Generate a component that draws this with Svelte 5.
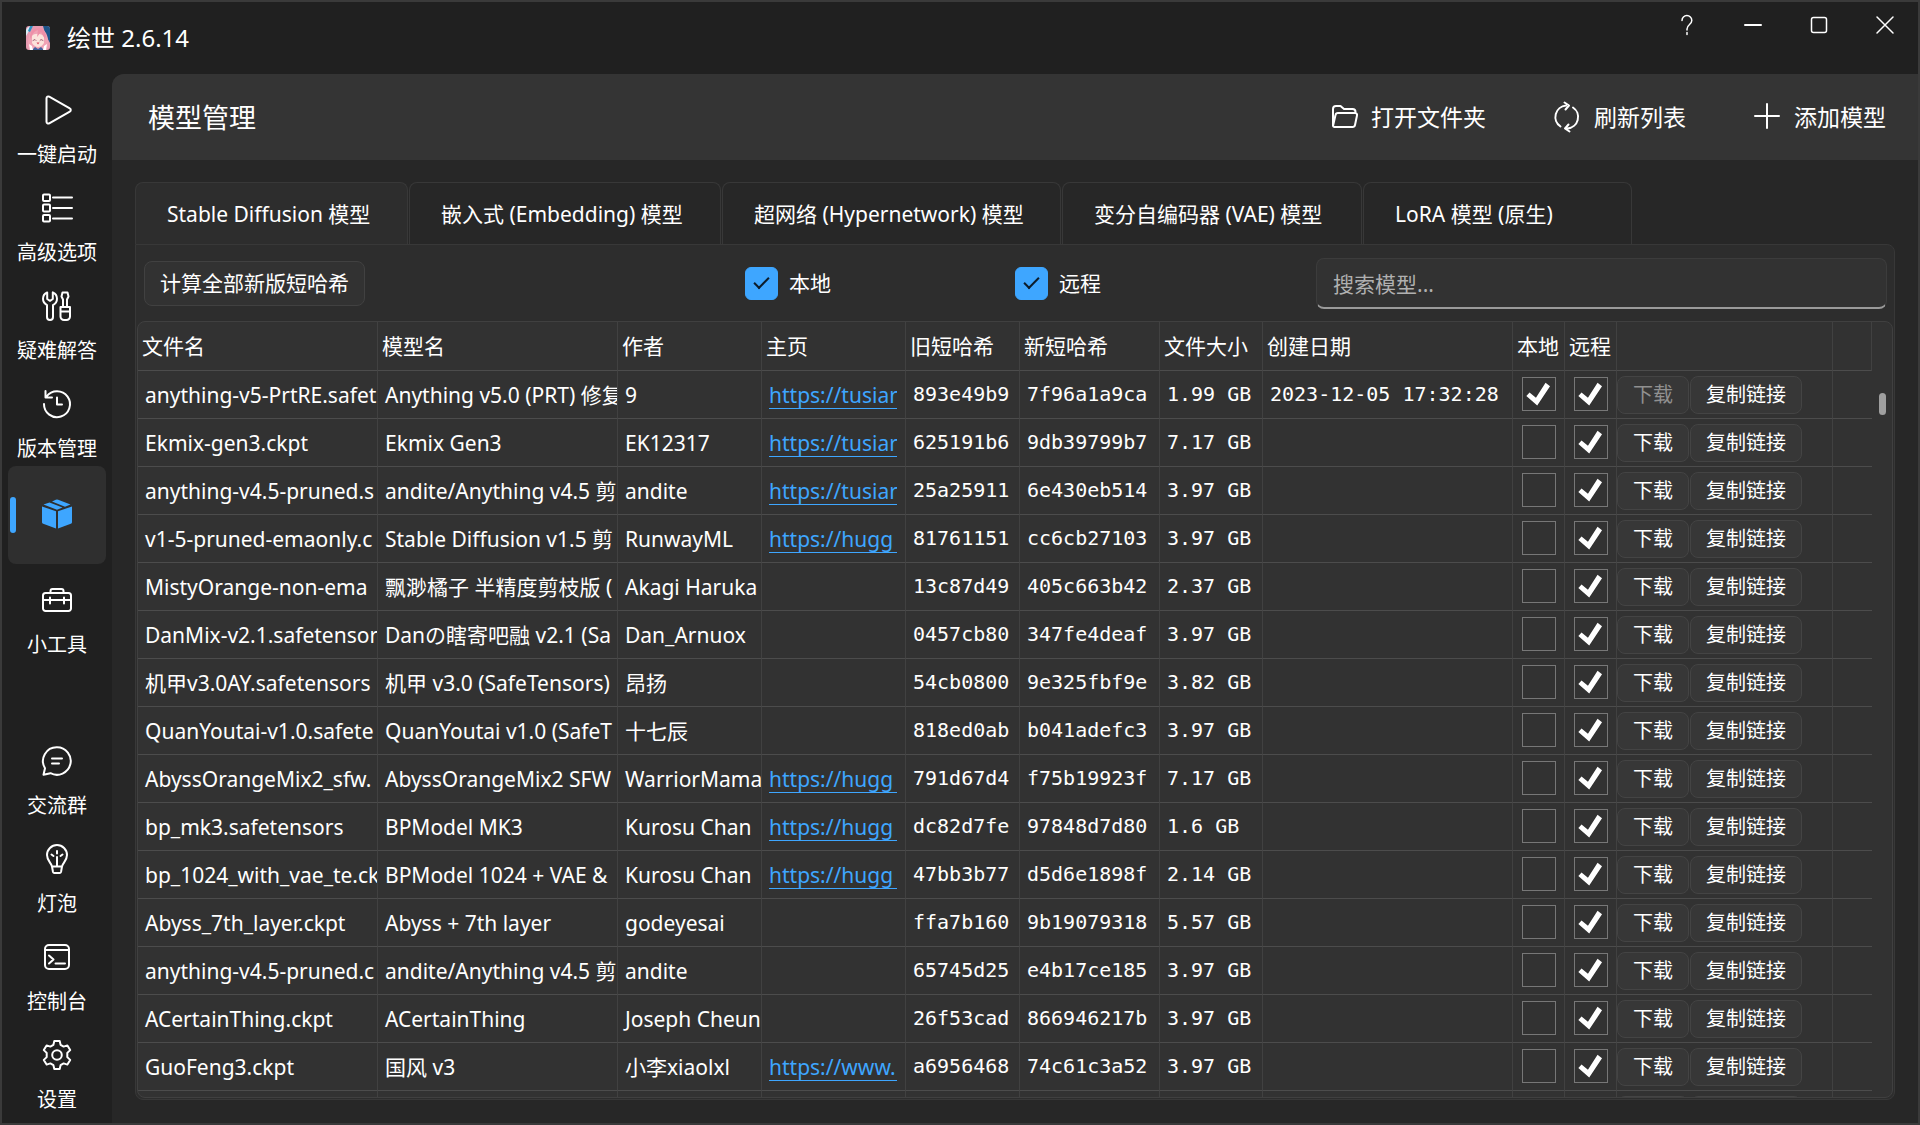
<script lang="ts">
	type Model = {
		file: string;
		name: string;
		author: string;
		home: string;
		oldHash: string;
		newHash: string;
		size: string;
		created?: string;
		local?: boolean;
	};

	let showLocal = $state(true);
	let showRemote = $state(true);
	let search = $state('');
	let activeTab = $state(0);
	let activePage = $state('models');

	const tabs = [
		'Stable Diffusion 模型',
		'嵌入式 (Embedding) 模型',
		'超网络 (Hypernetwork) 模型',
		'变分自编码器 (VAE) 模型',
		'LoRA 模型 (原生)'
	];

	const topPages = [
		{ id: 'launch', label: '一键启动' },
		{ id: 'options', label: '高级选项' },
		{ id: 'help', label: '疑难解答' },
		{ id: 'versions', label: '版本管理' },
		{ id: 'models', label: '模型管理' },
		{ id: 'tools', label: '小工具' }
	];

	const bottomPages = [
		{ id: 'chat', label: '交流群' },
		{ id: 'bulb', label: '灯泡' },
		{ id: 'console', label: '控制台' },
		{ id: 'settings', label: '设置' }
	];

	const models: Model[] = [
		{ file: 'anything-v5-PrtRE.safet', name: 'Anything v5.0 (PRT) 修复', author: '9', home: 'https://tusiar', oldHash: '893e49b9', newHash: '7f96a1a9ca', size: '1.99 GB', created: '2023-12-05 17:32:28', local: true },
		{ file: 'Ekmix-gen3.ckpt', name: 'Ekmix Gen3', author: 'EK12317', home: 'https://tusiar', oldHash: '625191b6', newHash: '9db39799b7', size: '7.17 GB' },
		{ file: 'anything-v4.5-pruned.s', name: 'andite/Anything v4.5 剪', author: 'andite', home: 'https://tusiar', oldHash: '25a25911', newHash: '6e430eb514', size: '3.97 GB' },
		{ file: 'v1-5-pruned-emaonly.c', name: 'Stable Diffusion v1.5 剪', author: 'RunwayML', home: 'https://hugg', oldHash: '81761151', newHash: 'cc6cb27103', size: '3.97 GB' },
		{ file: 'MistyOrange-non-ema', name: '飘渺橘子 半精度剪枝版 (', author: 'Akagi Haruka', home: '', oldHash: '13c87d49', newHash: '405c663b42', size: '2.37 GB' },
		{ file: 'DanMix-v2.1.safetensor', name: 'Danの瞎寄吧融 v2.1 (Sa', author: 'Dan_Arnuox', home: '', oldHash: '0457cb80', newHash: '347fe4deaf', size: '3.97 GB' },
		{ file: '机甲v3.0AY.safetensors', name: '机甲 v3.0 (SafeTensors)', author: '昂扬', home: '', oldHash: '54cb0800', newHash: '9e325fbf9e', size: '3.82 GB' },
		{ file: 'QuanYoutai-v1.0.safete', name: 'QuanYoutai v1.0 (SafeT', author: '十七辰', home: '', oldHash: '818ed0ab', newHash: 'b041adefc3', size: '3.97 GB' },
		{ file: 'AbyssOrangeMix2_sfw.', name: 'AbyssOrangeMix2 SFW', author: 'WarriorMama', home: 'https://hugg', oldHash: '791d67d4', newHash: 'f75b19923f', size: '7.17 GB' },
		{ file: 'bp_mk3.safetensors', name: 'BPModel MK3', author: 'Kurosu Chan', home: 'https://hugg', oldHash: 'dc82d7fe', newHash: '97848d7d80', size: '1.6 GB' },
		{ file: 'bp_1024_with_vae_te.ck', name: 'BPModel 1024 + VAE &', author: 'Kurosu Chan', home: 'https://hugg', oldHash: '47bb3b77', newHash: 'd5d6e1898f', size: '2.14 GB' },
		{ file: 'Abyss_7th_layer.ckpt', name: 'Abyss + 7th layer', author: 'godeyesai', home: '', oldHash: 'ffa7b160', newHash: '9b19079318', size: '5.57 GB' },
		{ file: 'anything-v4.5-pruned.c', name: 'andite/Anything v4.5 剪', author: 'andite', home: '', oldHash: '65745d25', newHash: 'e4b17ce185', size: '3.97 GB' },
		{ file: 'ACertainThing.ckpt', name: 'ACertainThing', author: 'Joseph Cheun', home: '', oldHash: '26f53cad', newHash: '866946217b', size: '3.97 GB' },
		{ file: 'GuoFeng3.ckpt', name: '国风 v3', author: '小李xiaolxl', home: 'https://www.', oldHash: 'a6956468', newHash: '74c61c3a52', size: '3.97 GB' },
		{ file: '', name: '', author: '', home: '', oldHash: '', newHash: '', size: '' }
	];
</script>

{#snippet navIcon(id: string)}
	<svg class="nav-icon" viewBox="0 0 30 30" aria-hidden="true">
		{#if id === 'launch'}
			<path d="M4.500 3.200v23.600a1.800 1.800 0 0 0 2.700 1.500l20.600-11.700a1.800 1.800 0 0 0 0-3.200L7.200 1.700a1.800 1.800 0 0 0-2.700 1.500z" />
		{:else if id === 'options'}
			<rect x="1" y="1.500" width="7" height="6.500" rx="1" />
			<rect x="1" y="11.500" width="7" height="7" rx="1" />
			<rect x="1" y="22" width="7" height="6.500" rx="1" />
			<path d="M11 4.500h19M11 15h19M11 25.500h19" />
		{:else if id === 'help'}
			<path d="M5.200 1.400A7 7 0 0 0 1 7.800c0 3 1.600 5 4 6.300V26a3 3 0 0 0 6 0V14.100c2.400-1.300 4-3.300 4-6.300a7 7 0 0 0-4.200-6.400V8l-2.800 1.800L5.200 8z" />
			<path d="M21 16V8.500l-1.500-3 1-4h5l1 4-1.500 3V16M18.500 16h9.500v9.500a3.500 3.500 0 0 1-3.500 3.500h-2.500a3.500 3.500 0 0 1-3.500-3.500zM18.500 20.500H28" />
		{:else if id === 'versions'}
			<path d="M4.500 7.500A13 13 0 1 1 2 15M3.500 2v6.500h6.500M15 8.500v7h5" />
		{:else if id === 'models'}
			<g class="solid">
				<path d="M14 12.200v17.300L1.200 24.800a1.500 1.500 0 0 1-1.200-1.500V7.500z" />
				<path d="M16 12.200v17.300l12.800-4.700a1.500 1.500 0 0 0 1.200-1.500V7.500z" />
				<path d="M1.500 5.600 7.500 3.500 20.500 8.600 15 10.700zM10 2.500l3.800-1.800a3 3 0 0 1 2.400 0L28.500 5.600 23 7.700z" />
			</g>
		{:else if id === 'tools'}
			<path d="M3.500 8h23A2.500 2.500 0 0 1 29 10.500v13a2.500 2.500 0 0 1-2.500 2.500h-23A2.500 2.500 0 0 1 1 23.500v-13A2.500 2.500 0 0 1 3.500 8zM8.500 8V6A2 2 0 0 1 10.500 4h9a2 2 0 0 1 2 2v2M1 15h28M8 12.500v6M22 12.500v6" />
		{:else if id === 'chat'}
			<path d="M15 1.200A13.800 13.800 0 1 1 8.500 27.200L1.500 28.700l1.500-6.500A13.800 13.800 0 0 1 15 1.200zM10 12.500h10M10 17.500h7" />
		{:else if id === 'bulb'}
			<path d="M10 22.500C9.500 19 5 17 5 11a10 10 0 0 1 20 0c0 6-4.500 8-5 11.500zM10 22.500l1 5.500a1.500 1.500 0 0 0 1.500 1h5A1.500 1.500 0 0 0 19 28l1-5.500M15 13v9M15 7v2.500M9.500 10.500l2 1.500M20.500 10.500l-2 1.500" />
		{:else if id === 'console'}
			<rect x="3" y="3" width="24" height="24" rx="4" />
			<path d="M3 8h24M7 13.500l4.500 4-4.500 4M13.500 21.500h9.500" />
		{:else}
			<path d="M12.300 1h5.400l.9 3.900 3 1.700 3.800-1.200 2.800 4.700-2.900 2.800v4.200l2.900 2.800-2.800 4.700-3.800-1.200-3 1.700-.9 3.900h-5.400l-.9-3.900-3-1.700-3.800 1.200-2.800-4.700 2.900-2.800v-4.200l-2.900-2.800 2.800-4.700 3.800 1.200 3-1.700z" />
			<circle cx="15" cy="15" r="4.800" />
		{/if}
	</svg>
{/snippet}

{#snippet navItem(page)}
	<button
		class="nav-item"
		class:active={activePage === page.id}
		aria-label={page.label}
		onclick={() => (activePage = page.id)}
	>
		{@render navIcon(page.id)}
		{#if activePage !== page.id}
			<span>{page.label}</span>
		{/if}
	</button>
{/snippet}

<div class="window">
	<header class="titlebar">
		<div class="brand">
			<svg class="avatar" viewBox="0 0 24 24" aria-hidden="true">
				<rect width="24" height="24" rx="3" fill="#e59ab0" />
				<path d="M17 0h4a3 3 0 0 1 3 3v14l-4-7z" fill="#1d5487" />
				<path d="M0 4c2-3 3-4 6-4h1L3 5 0 10z" fill="#d8eef5" />
				<path d="M4 0h3L4 6 2 5z" fill="#2f8fc0" />
				<path d="M3 24c-2-6-1-17 4-20 4-3 10-2 13 3 3 6 3 12 1 17z" fill="#f0a3b5" />
				<path d="M6 10c2-3 10-3 12 1v6c-2 3-4 4-6 4s-5-2-6-4z" fill="#fbe3dc" />
				<path d="M5 13c1-6 4-8 7-9l-1 7 4-5 4 7 1-3c-1-6-4-8-8-8S4 5 4 11z" fill="#ee8fa8" />
				<path d="M7 14.500l2-1 1 1M14 14.500l1-1 2 1" stroke="#a3647a" stroke-width="1" fill="none" />
				<path d="M10.500 16.500h3l-1.500 2z" fill="#d9485f" />
				<path d="M6 24l3-3 3 2 3-2 3 3z" fill="#3f5f9c" />
				<path d="M3 18l3 2 1 4H4zM18 20l3-2-1 6h-3z" fill="#fff" />
			</svg>
			<span>绘世 2.6.14</span>
		</div>
		<div class="window-controls">
			<button aria-label="帮助">
				<svg viewBox="0 0 20 20"><path d="M5 5.500a4.800 4.800 0 0 1 9.800 0c0 4-4.800 4-4.800 8.500v1M10 17.500v2" /></svg>
			</button>
			<button aria-label="最小化">
				<svg viewBox="0 0 20 20"><path class="thick" d="M2 10h16" /></svg>
			</button>
			<button aria-label="最大化">
				<svg viewBox="0 0 20 20"><rect x="2.500" y="2.500" width="15" height="15" rx="2" /></svg>
			</button>
			<button aria-label="关闭">
				<svg viewBox="0 0 20 20"><path d="M2 2l16 16M18 2L2 18" /></svg>
			</button>
		</div>
	</header>

	<div class="body">
		<nav class="sidebar">
			<div>
				{#each topPages as page}
					{@render navItem(page)}
				{/each}
			</div>
			<div>
				{#each bottomPages as page}
					{@render navItem(page)}
				{/each}
			</div>
		</nav>

		<main class="page">
			<div class="page-header">
				<h1>模型管理</h1>
				<div class="actions">
					<button>
						<svg viewBox="0 0 28 28"><path d="M3 23V6a3 3 0 0 1 3-3h4.500l3.500 3h8.500a3 3 0 0 1 3 3v1M3 23L5.500 12a2.500 2.500 0 0 1 2.500-2h17a2 2 0 0 1 2 2.500L25 22a2.500 2.500 0 0 1-2.500 2H4.500A1.500 1.500 0 0 1 3 23z" /></svg>
						打开文件夹
					</button>
					<button>
						<svg viewBox="0 0 28 28"><path d="M7.500 23.500A11.500 11.500 0 0 1 13 2.500M11.500-.5l4.500 3-3.500 4M20 4.500a11.500 11.500 0 0 1-5.500 21M16.500 28.500L12 25.500l3.500-4" /></svg>
						刷新列表
					</button>
					<button>
						<svg viewBox="0 0 28 28"><path d="M14 1v24M2 13h24" /></svg>
						添加模型
					</button>
				</div>
			</div>

			<div class="content">
				<div class="tabs" role="tablist">
					{#each tabs as tab, i}
						<button role="tab" aria-selected={activeTab === i} class:active={activeTab === i} onclick={() => (activeTab = i)}>{tab}</button>
					{/each}
				</div>

				<section class="panel">
					<div class="toolbar">
						<div>
							<button class="hash-btn">计算全部新版短哈希</button>
						</div>
						<label class="filter">
							<input type="checkbox" bind:checked={showLocal} />
							本地
						</label>
						<label class="filter">
							<input type="checkbox" bind:checked={showRemote} />
							远程
						</label>
						<input class="search" type="text" placeholder="搜索模型..." aria-label="搜索模型" bind:value={search} />
					</div>

					<div class="grid">
						<table>
							<colgroup>
								<col class="w-file" />
								<col class="w-file" />
								<col class="w-author" />
								<col class="w-author" />
								<col class="w-old" />
								<col class="w-new" />
								<col class="w-size" />
								<col class="w-date" />
								<col class="w-check" />
								<col class="w-check" />
								<col class="w-actions" />
								<col />
							</colgroup>
							<thead>
								<tr>
									<th>文件名</th>
									<th>模型名</th>
									<th>作者</th>
									<th>主页</th>
									<th>旧短哈希</th>
									<th>新短哈希</th>
									<th>文件大小</th>
									<th>创建日期</th>
									<th>本地</th>
									<th>远程</th>
									<th></th>
									<th></th>
								</tr>
							</thead>
							<tbody>
								{#each models as m}
									<tr>
										<td>{m.file}</td>
										<td>{m.name}</td>
										<td>{m.author}</td>
										<td class="home">
											{#if m.home}<a href={m.home}>{m.home}</a>{/if}
										</td>
										<td class="mono">{m.oldHash}</td>
										<td class="mono">{m.newHash}</td>
										<td class="mono">{m.size}</td>
										<td class="mono">{m.created ?? ''}</td>
										<td class="tick"><input type="checkbox" aria-label="本地" checked={m.local} /></td>
										<td class="tick"><input type="checkbox" aria-label="远程" checked /></td>
										<td class="row-actions">
											<div>
												<button disabled={m.local}>下载</button>
												<button>复制链接</button>
											</div>
										</td>
										<td></td>
									</tr>
								{/each}
							</tbody>
						</table>
						<div class="thumb"></div>
					</div>
				</section>
			</div>
		</main>
	</div>
</div>

<style>
	:global(body) {
		background: #202020;
	}

	.window {
		display: flex;
		flex-direction: column;
		height: 100vh;
		box-sizing: border-box;
		border: 2px solid #3a3a3a;
		background: #202020;
		color: #fff;
		font-family: 'Noto Sans', 'Noto Sans CJK SC', sans-serif;
		font-size: 21px;
		line-height: 28px;
		overflow: hidden;
	}

	button,
	input {
		font: inherit;
		color: inherit;
		box-sizing: border-box;
		margin: 0;
	}

	button {
		background: none;
		border: none;
		padding: 0;
		white-space: nowrap;
	}

	svg {
		fill: none;
		stroke: #fff;
		stroke-width: 2;
		stroke-linejoin: round;
		stroke-linecap: round;
		overflow: visible;
	}

	/* title bar */
	.titlebar {
		display: flex;
		justify-content: space-between;
		height: 72px;
		flex: none;
	}

	.brand {
		display: flex;
		align-items: center;
		gap: 17px;
		padding-left: 24px;
		font-size: 24px;
	}

	.avatar {
		width: 24px;
		height: 24px;
		stroke: none;
		overflow: hidden;
	}

	.window-controls {
		display: flex;
		height: 46px;
	}

	.window-controls button {
		display: flex;
		align-items: center;
		justify-content: center;
		width: 66px;
	}

	.window-controls svg {
		width: 20px;
		height: 20px;
		stroke-width: 1.500;
	}

	.window-controls .thick {
		stroke-width: 2;
	}

	.body {
		display: flex;
		flex: 1;
		min-height: 0;
	}

	/* sidebar */
	.sidebar {
		display: flex;
		flex-direction: column;
		justify-content: space-between;
		width: 110px;
		flex: none;
		box-sizing: border-box;
		padding: 0 6px 6px;
	}

	.nav-item {
		position: relative;
		display: flex;
		flex-direction: column;
		align-items: center;
		gap: 16px;
		width: 98px;
		height: 98px;
		padding-top: 21px;
		border-radius: 8px;
		font-size: 20px;
		line-height: 28px;
	}

	.nav-item.active {
		background: #2f2f2f;
		justify-content: center;
		padding: 0 0 2px;
	}

	.nav-item.active::before {
		content: '';
		position: absolute;
		left: 2px;
		top: 31px;
		width: 6px;
		height: 36px;
		border-radius: 3px;
		background: #3ea6ff;
	}

	.nav-icon {
		width: 30px;
		height: 30px;
		flex: none;
	}

	.solid {
		fill: #3ea6ff;
		stroke: none;
	}

	/* page */
	.page {
		flex: 1;
		min-width: 0;
		display: flex;
		flex-direction: column;
		background: #272727;
		border-top-left-radius: 12px;
		overflow: hidden;
	}

	.page-header {
		display: flex;
		align-items: center;
		justify-content: space-between;
		height: 86px;
		flex: none;
		padding: 0 32px 0 36px;
		background: #343434;
	}

	h1 {
		margin: 0;
		padding-top: 2px;
		font-size: 27px;
		line-height: 30px;
		font-weight: 400;
	}

	.actions {
		display: flex;
		gap: 67px;
		font-size: 23px;
	}

	.actions button {
		display: flex;
		align-items: center;
		gap: 13px;
	}

	.actions svg {
		width: 28px;
		height: 28px;
	}

	.content {
		display: flex;
		flex-direction: column;
		flex: 1;
		min-height: 0;
		padding: 22px 23px 23px;
	}

	.tabs {
		display: grid;
		grid-template-columns: 273px 312px 339px 300px 269px;
		gap: 1px;
		flex: none;
	}

	.tabs button {
		height: 62px;
		padding-left: 31px;
		text-align: left;
		border: 1px solid #383838;
		border-bottom: none;
		border-radius: 8px 8px 0 0;
		background: #272727;
	}

	.tabs button.active {
		background: #2d2d2d;
	}

	.panel {
		display: flex;
		flex-direction: column;
		flex: 1;
		min-height: 0;
		border: 1px solid #383838;
		border-radius: 0 8px 8px 8px;
		background: #2d2d2d;
	}

	.toolbar {
		display: grid;
		grid-template-columns: minmax(0, 601px) minmax(0, 270px) minmax(0, 301px) 1fr;
		align-items: center;
		height: 76px;
		flex: none;
		padding: 0 7px 0 8px;
	}

	.hash-btn {
		height: 45px;
		padding: 0 15px;
		border: 1px solid #414141;
		border-radius: 8px;
		background: #323232;
	}

	.filter {
		display: flex;
		align-items: center;
		gap: 11px;
	}

	.filter input {
		appearance: none;
		display: flex;
		align-items: center;
		justify-content: center;
		width: 33px;
		height: 33px;
		border: 1px solid #8a8a8a;
		border-radius: 6px;
	}

	.filter input:checked {
		background: #3ea6ff;
		border-color: #3ea6ff;
	}

	.filter input:checked::before {
		content: '';
		width: 13px;
		height: 6px;
		border-left: 2px solid #0c1c2b;
		border-bottom: 2px solid #0c1c2b;
		transform: rotate(-45deg);
		margin-bottom: 5px;
	}

	.search {
		width: 100%;
		height: 51px;
		padding: 3px 16px 0;
		border: 1px solid #3c3c3c;
		border-bottom: 2px solid #9a9a9a;
		border-radius: 8px;
		background: #323232;
		outline: none;
	}

	.search::placeholder {
		color: #b0b0b0;
		opacity: 1;
	}

	/* model table */
	.grid {
		position: relative;
		flex: 1;
		min-height: 0;
		margin: 0 1px 1px;
		border: 1px solid #404040;
		border-radius: 8px;
		background: #323232;
		overflow: hidden;
	}

	table {
		width: calc(100% - 20px);
		table-layout: fixed;
		border-collapse: separate;
		border-spacing: 0;
	}

	.w-file { width: 240px; }
	.w-author { width: 144px; }
	.w-old { width: 114px; }
	.w-new { width: 140px; }
	.w-size { width: 103px; }
	.w-date { width: 250px; }
	.w-check { width: 52px; }
	.w-actions { width: 216px; }

	th,
	td {
		box-sizing: border-box;
		height: 48px;
		padding: 0 0 0 7px;
		border-right: 1px solid #414141;
		border-bottom: 1px solid #4c4c4c;
		text-align: left;
		font-weight: 400;
		white-space: nowrap;
		overflow: hidden;
	}

	th {
		height: 49px;
		padding-left: 4px;
	}

	td:last-child {
		border-right: none;
	}

	td.home {
		padding-top: 2px;
		padding-right: 8px;
	}

	.home a {
		display: block;
		overflow: hidden;
		color: #3ea6ff;
		text-decoration: none;
		line-height: 26px;
		border-bottom: 1px solid #3ea6ff;
	}

	td.mono {
		padding-bottom: 2px;
		font-family: 'DejaVu Sans Mono', 'Liberation Mono', monospace;
		font-size: 20px;
	}

	td.tick {
		padding: 0 0 1px;
	}

	.tick input {
		appearance: none;
		display: block;
		width: 34px;
		height: 34px;
		margin: 0 auto;
		border: 1px solid #777;
	}

	.tick input:checked::before {
		content: '';
		display: block;
		width: 32px;
		height: 32px;
		background: #fff;
		clip-path: polygon(12% 56%, 22% 45%, 42% 62%, 72% 15%, 86% 26%, 46% 86%);
	}

	td.row-actions {
		padding: 0;
	}

	.row-actions div {
		display: flex;
		gap: 1px;
	}

	.row-actions button {
		height: 38px;
		padding: 0 15px;
		border: 1px solid #444;
		border-radius: 8px;
		background: #373737;
		font-size: 20px;
	}

	.row-actions button:disabled {
		color: #909090;
	}

	.thumb {
		position: absolute;
		top: 71px;
		right: 6px;
		width: 7px;
		height: 22px;
		border-radius: 4px;
		background: #9f9f9f;
	}
</style>
